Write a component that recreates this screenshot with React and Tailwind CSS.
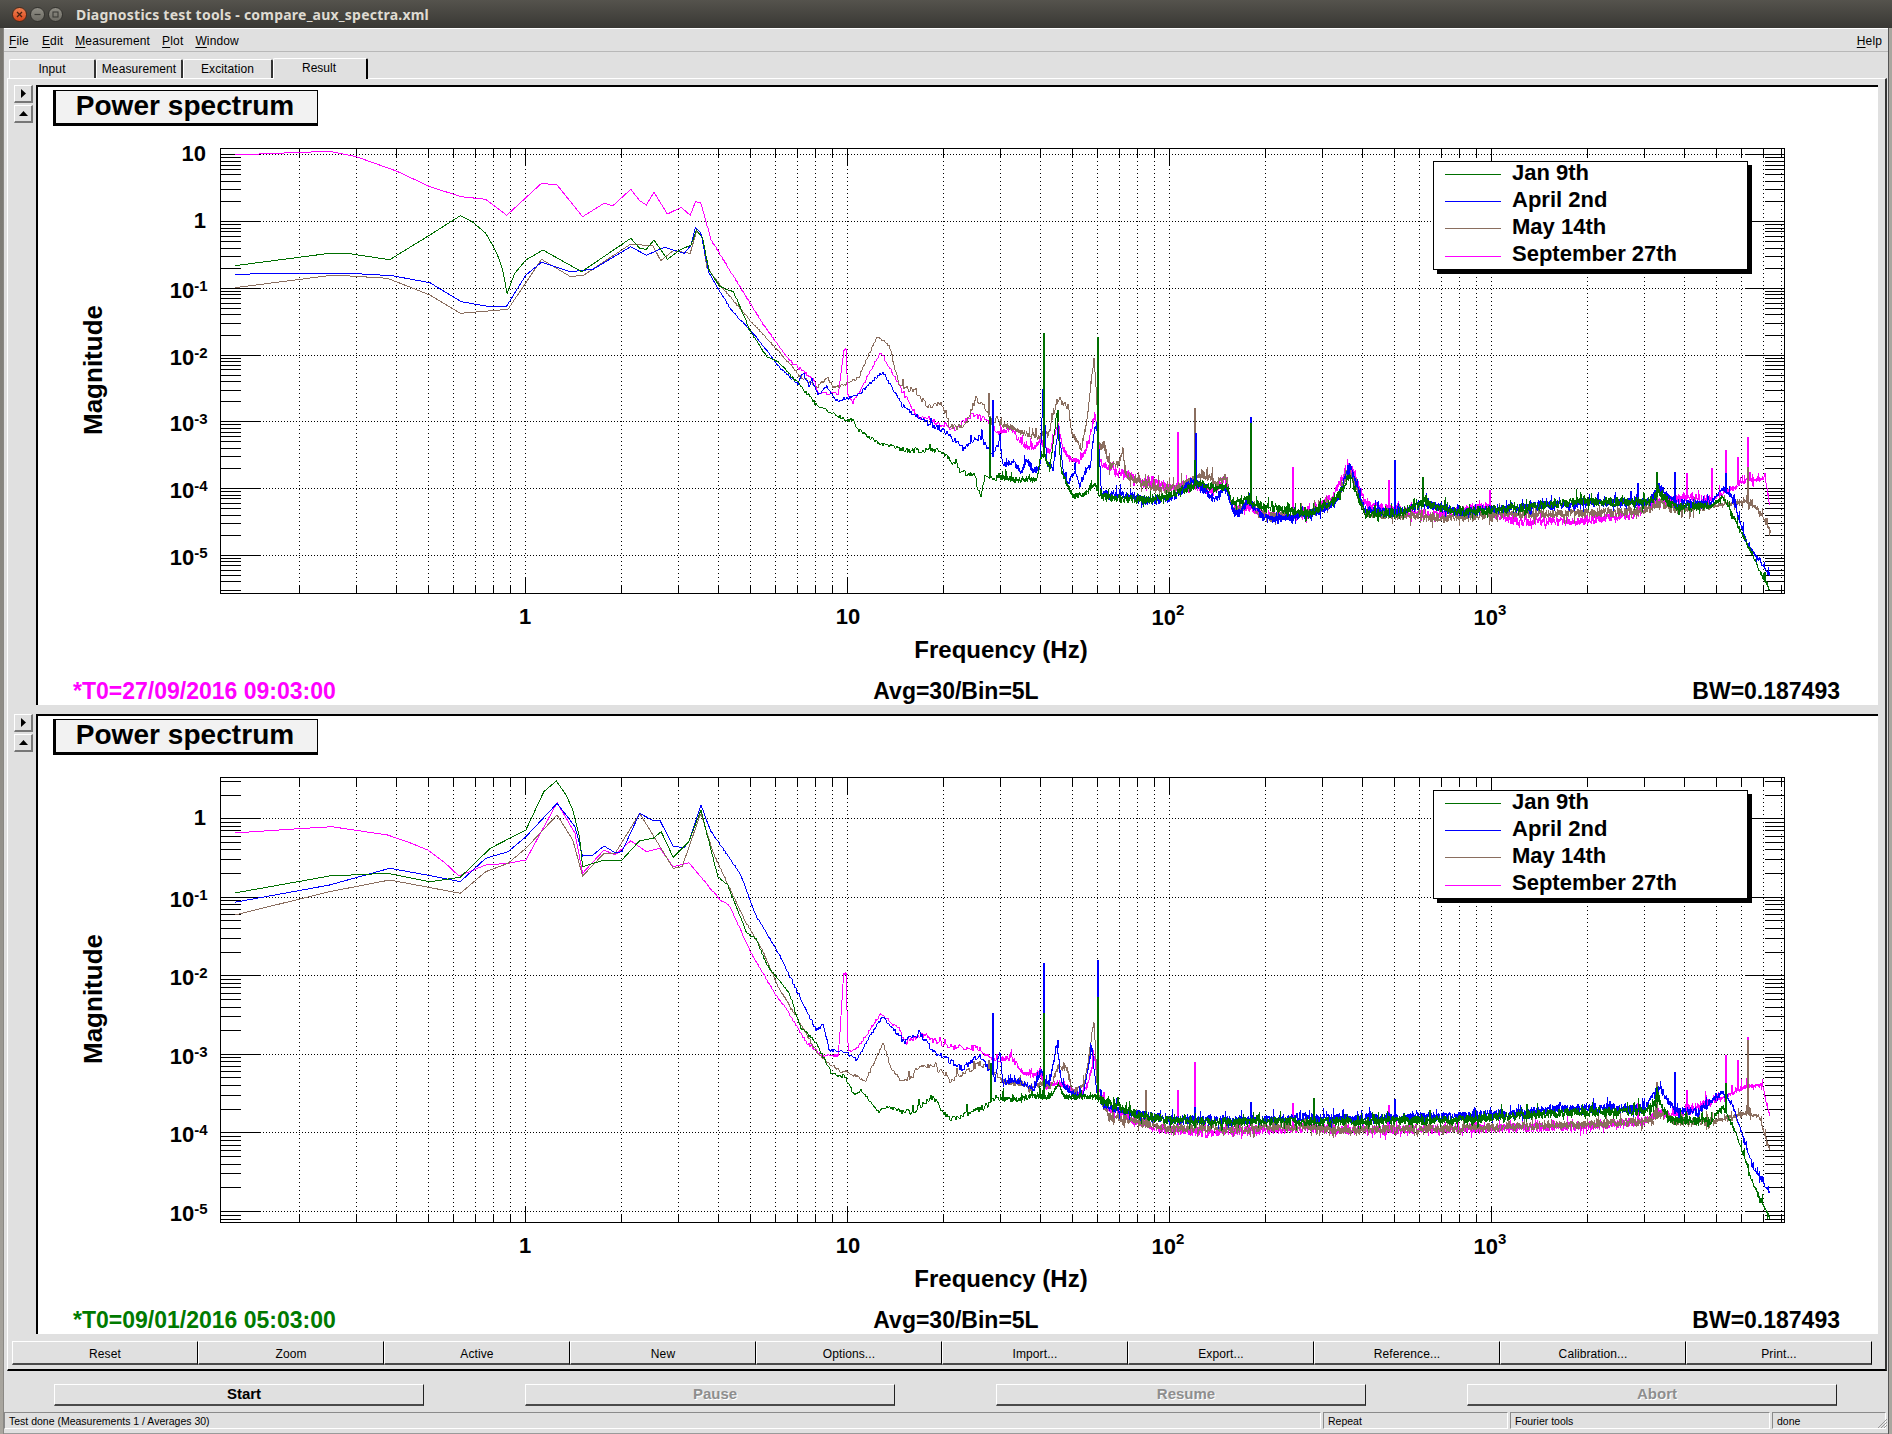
import React, { useMemo } from "react";

const MAGENTA = "#ff00ff", BLUE = "#0000ff", BROWN = "#8a6e5f", GREEN = "#006f00";
const L = 220.5, R = 1784.5, XS = 322, X1 = 525;
const xOf = (f) => X1 + XS * Math.log10(f);

const P1 = {
  magenta: {
    low: [[78,75],[170,70],[290,64],[350,80],[440,123],[515,170],[585,200],[640,208],[687,256],[765,160],[800,165],[857,260],[905,220],[925,227],[965,178],[985,212],[1000,225],[1017,187],[1047,252],[1078,232],[1098,256],[1110,215],[1122,220],[1145,330],[1200,450],[1265,590],[1320,690],[1375,750],[1385,790],[1430,790],[1442,660],[1447,655],[1451,790],[1462,820],[1480,780],[1525,665],[1568,770]],
    high: [[110,350],[150,370],[175,390],[200,345],[220,355],[240,390],[265,375],[680,640],[690,645],[760,640],[800,580],[825,490],[850,610],[870,620],[900,630],[960,645],[1050,620],[1060,640],[1100,665],[1200,665],[1300,640],[1330,610],[1380,590],[1420,600],[1450,570],[1480,540],[1510,535],[1518,620]],
    mid: [[0,340],[35,325],[60,370],[100,385],[120,360],[130,380],[150,395],[175,310],[185,370],[205,415],[240,425],[262,380],[285,285],[295,350],[300,430],[340,450],[370,460],[400,470],[430,490],[460,480],[500,505],[560,495],[620,510],[640,515],[680,470],[695,560],[745,560]],
    spikes: [[540,395],[730,500],[888,540],[1055,570],[1300,555],[1380,520],[1445,450],[1465,470],[1480,410],[1422,505]],
  },
  brown: {
    low: [[78,473],[300,435],[420,445],[515,495],[583,550],[690,538],[765,388],[830,440],[860,435],[965,342],[1015,348],[1032,392],[1060,362],[1098,370],[1112,305],[1125,320],[1135,410],[1165,465],[1235,575],[1300,670],[1345,740],[1385,770],[1405,740],[1420,775],[1450,760],[1475,745],[1517,618],[1545,650],[1568,775]],
    high: [[105,270],[130,320],[150,310],[165,380],[190,380],[208,295],[220,315],[235,370],[680,645],[700,650],[760,640],[800,610],[825,510],[850,640],[980,655],[1050,645],[1200,640],[1300,635],[1340,610],[1360,630],[1440,615],[1480,605],[1500,630],[1520,700]],
    mid: [[0,310],[60,335],[120,355],[130,340],[145,345],[170,245],[180,240],[205,260],[215,340],[245,385],[262,290],[282,125],[290,220],[296,380],[312,375],[330,440],[355,430],[370,390],[375,460],[420,490],[500,510],[560,490],[610,460],[650,490],[680,470],[695,560],[720,575],[745,540]],
    spikes: [[228,280],[568,325],[1330,515],[1480,500]],
  },
  blue: {
    low: [[78,433],[190,430],[350,431],[430,437],[515,458],[585,515],[640,528],[687,528],[730,435],[765,397],[830,425],[880,418],[965,350],[1000,376],[1040,352],[1085,370],[1100,345],[1110,292],[1122,310],[1140,430],[1190,540],[1245,620],[1300,715],[1340,760],[1350,725],[1365,770],[1370,745],[1385,795],[1405,770],[1425,812],[1450,805],[1470,800],[1530,725],[1568,815]],
    high: [[90,325],[130,370],[160,400],[185,445],[215,410],[235,470],[680,650],[700,660],[760,640],[800,610],[825,500],[850,630],[900,640],[950,610],[1000,635],[1200,610],[1320,605],[1335,560],[1360,610],[1420,610],[1440,565],[1455,590],[1480,730],[1500,780],[1518,830]],
    mid: [[0,360],[10,440],[40,425],[65,460],[80,415],[100,460],[120,440],[130,190],[140,430],[160,445],[175,320],[190,460],[205,490],[225,450],[240,500],[255,460],[270,440],[285,315],[295,350],[305,525],[340,525],[380,525],[440,545],[500,535],[530,525],[580,480],[640,535],[680,510],[700,575],[720,580],[745,540]],
    spikes: [[235,300],[320,245],[570,400],[660,350],[898,480],[945,560],[1300,550],[1360,515],[1445,520]],
  },
  green: {
    low: [[78,407],[290,370],[340,372],[425,389],[515,315],[583,257],[610,275],[640,310],[655,345],[665,370],[678,420],[688,490],[705,430],[730,390],[768,360],[855,425],[965,325],[985,355],[1000,358],[1017,330],[1047,388],[1075,360],[1100,345],[1112,300],[1125,320],[1140,420],[1165,470],[1195,485],[1235,610],[1270,680],[1295,695],[1340,760],[1385,830],[1450,870],[1465,870],[1470,895],[1520,940],[1568,955]],
    high: [[100,450],[130,450],[150,450],[185,520],[205,520],[215,590],[225,530],[680,620],[690,625],[760,640],[800,600],[825,530],[850,640],[900,640],[945,610],[1000,635],[1100,625],[1200,605],[1320,605],[1335,580],[1360,620],[1420,620],[1440,590],[1455,640],[1480,730],[1500,810],[1518,870]],
    mid: [[0,475],[50,480],[110,480],[125,400],[140,420],[150,450],[170,280],[185,460],[220,530],[260,520],[285,490],[300,530],[360,535],[440,540],[500,530],[550,510],[600,490],[640,505],[680,500],[700,555],[745,540]],
    spikes: [[320,100],[408,110],[342,330],[568,480],[660,370],[230,350],[945,530],[1330,515]],
  },
};

const P2 = {
  magenta: {
    low: [[78,189],[200,178],[295,170],[420,195],[470,218],[510,240],[550,280],[580,318],[640,285],[690,280],[730,270],[800,98],[840,190],[857,310],[905,240],[930,255],[965,212],[1000,245],[1030,235],[1060,290],[1095,278],[1165,390],[1185,405],[1235,550],[1285,665],[1320,730],[1360,820],[1400,860],[1430,855],[1442,610],[1447,610],[1452,845],[1475,830],[1525,730],[1568,780]],
    high: [[90,310],[120,285],[160,320],[210,325],[240,360],[680,572],[760,565],[780,570],[900,570],[1050,565],[1200,560],[1310,545],[1335,515],[1350,530],[1385,510],[1430,480],[1480,440],[1505,435],[1518,530]],
    mid: [[0,330],[35,320],[60,360],[90,375],[120,370],[135,410],[170,400],[200,410],[240,440],[265,400],[285,320],[295,420],[320,470],[400,510],[500,540],[620,550],[745,540]],
    spikes: [[540,450],[568,365],[1380,450],[1445,345],[1465,360],[1480,290],[730,490],[888,495],[400,330],[1300,490]],
  },
  brown: {
    low: [[78,435],[290,365],[425,330],[583,370],[640,305],[690,280],[730,235],[800,135],[835,210],[857,318],[905,250],[930,250],[985,130],[1060,295],[1080,290],[1122,130],[1150,250],[1220,450],[1260,540],[1295,650],[1340,750],[1385,855],[1430,900],[1460,910],[1490,935],[1530,820],[1550,900],[1568,925]],
    high: [[100,415],[115,375],[150,390],[165,425],[215,370],[240,400],[680,560],[760,560],[780,570],[1000,565],[1200,555],[1310,545],[1340,520],[1360,545],[1420,545],[1480,520],[1500,530],[1518,630]],
    mid: [[0,390],[30,400],[70,400],[90,420],[125,400],[150,410],[175,350],[200,355],[220,430],[255,400],[282,210],[293,430],[330,500],[400,510],[500,535],[620,535],[745,540]],
    spikes: [[487,450],[1330,425],[1480,300],[228,360]],
  },
  blue: {
    low: [[78,397],[290,345],[425,295],[520,318],[583,335],[640,265],[690,245],[730,200],[800,100],[840,170],[857,258],[880,255],[905,228],[930,248],[945,245],[985,130],[1015,152],[1030,150],[1060,230],[1085,232],[1095,215],[1122,105],[1145,185],[1210,310],[1245,435],[1300,560],[1340,670],[1380,780],[1395,765],[1410,840],[1450,850],[1470,870],[1500,800],[1530,740],[1568,800]],
    high: [[90,305],[115,280],[135,330],[185,385],[215,345],[240,420],[680,540],[760,530],[780,535],[1000,530],[1200,505],[1310,505],[1335,440],[1360,510],[1400,515],[1440,455],[1455,490],[1490,680],[1518,760]],
    mid: [[0,310],[10,400],[40,390],[70,400],[100,420],[125,360],[135,400],[150,400],[170,280],[185,400],[215,430],[250,440],[275,290],[292,440],[320,470],[400,490],[500,510],[620,510],[745,510]],
    spikes: [[235,220],[320,70],[342,300],[408,60],[568,500],[660,485],[898,478],[1360,395],[1445,430]],
  },
  green: {
    low: [[78,369],[290,318],[420,310],[515,335],[583,322],[650,235],[730,180],[770,65],[798,33],[820,75],[835,120],[850,200],[857,290],[905,270],[945,270],[985,212],[1015,205],[1033,185],[1060,262],[1095,215],[1122,120],[1160,320],[1182,345],[1225,490],[1245,505],[1270,585],[1320,670],[1345,770],[1380,820],[1415,910],[1445,920],[1465,975],[1480,960],[1520,1025],[1535,1010],[1568,1020]],
    high: [[100,520],[135,470],[165,540],[225,500],[240,470],[680,545],[760,545],[780,545],[1000,540],[1200,515],[1310,515],[1335,480],[1350,540],[1420,545],[1440,500],[1460,570],[1490,730],[1518,835]],
    mid: [[0,445],[40,450],[100,440],[125,440],[150,440],[175,400],[190,440],[240,440],[285,440],[320,460],[400,490],[500,510],[620,515],[745,515]],
    spikes: [[232,370],[320,220],[408,170],[765,475],[1330,440],[1445,430]],
  },
};

function rng(seed) {
  let a = seed;
  return () => {
    a |= 0; a = (a + 0x6d2b79f5) | 0;
    let t = Math.imul(a ^ (a >>> 15), 1 | a);
    t = (t + Math.imul(t ^ (t >>> 7), 61 | t)) ^ t;
    return ((t ^ (t >>> 14)) >>> 0) / 4294967296;
  };
}

function tracePath(tr, y0Low, y0Mid, y0High, seed) {
  const r = rng(seed);
  const midStart = 1000;
  const midEnd = 1000 + 745 / 3;
  const pts = [
    ...tr.low.map(([x, y]) => [200 + x / 2.24, y0Low + y / 3]),
    ...tr.high.map(([x, y]) => [850 + x / 1.65, y0High + y / 3]).filter((p) => p[0] > 900 && p[0] < midStart),
    ...tr.mid.map(([x, y]) => [1000 + x / 3, y0Mid + y / 3]),
    ...tr.high.map(([x, y]) => [850 + x / 1.65, y0High + y / 3]).filter((p) => p[0] > midEnd),
  ];
  const at = (x) => {
    for (let i = 1; i < pts.length; i++) {
      if (x <= pts[i][0]) {
        const [a, b] = pts[i - 1], [c, d] = pts[i];
        return b + ((d - b) * (x - a)) / Math.max(c - a, 0.001);
      }
    }
    return pts[pts.length - 1][1];
  };
  let d = "";
  const end = pts[pts.length - 1][0];
  const lowEnd = 700;
  pts.filter((p) => p[0] < lowEnd).forEach((p, i) => {
    d += (i ? "L" : "M") + p[0].toFixed(1) + " " + p[1].toFixed(1);
  });
  let x = lowEnd;
  while (x < end) {
    const amp = x < 790 ? 0.7 : x < 900 ? 1.7 : x < 1100 ? 3 : 4.6;
    let y = at(x) + (r() - 0.5) * 2 * amp * (x > end - 60 ? 0.4 : 1);
    if (x > 900 && r() < 0.06) y -= 2 + r() * 7;
    if (x > 1100 && r() < 0.06) y += 2 + r() * 4;
    d += "L" + x.toFixed(1) + " " + y.toFixed(1);
    x += x < 1000 ? 1 : 0.34;
  }
  tr.spikes.forEach(([zx, zy]) => {
    const sx = 850 + zx / 1.65;
    const top = (y0High + zy / 3).toFixed(1);
    const base = at(sx).toFixed(1);
    d += `M${sx.toFixed(1)} ${base}L${sx.toFixed(1)} ${top}M${(sx + 1).toFixed(1)} ${base}L${(sx + 1).toFixed(1)} ${top}`;
  });
  return d;
}

function Trace({ data, y0Low, y0Mid, y0High, seed, color }) {
  const d = useMemo(() => tracePath(data, y0Low, y0Mid, y0High, seed), []);
  return <path d={d} fill="none" stroke={color} strokeWidth="1" />;
}

function Plot({ dy, yZero, yDec, data, y0Low, y0Mid, y0High, yTop, yBot, yLabels, seed, t0, t0Color }) {
  const yOf = (e) => Math.round(yZero - yDec * e) + 0.5;
  const topY = yTop + 0.5, botY = yBot + 0.5;
  const majorsX = [0, 1, 2, 3];
  const minorsX = [];
  for (let e = -1; e <= 3; e++) {
    for (let m = 2; m <= 9; m++) {
      const px = xOf(m * Math.pow(10, e));
      if (px > L && px < R) minorsX.push(px);
    }
  }
  const hLines = [], minorY = [];
  for (let e = -6; e <= 1; e++) {
    const py = yOf(e);
    if (py > yTop && py < yBot) hLines.push(py);
    for (let m = 2; m <= 9; m++) {
      const q = yOf(e + Math.log10(m));
      if (q > yTop && q < yBot) minorY.push(q);
    }
  }
  const allX = [...minorsX, ...majorsX.map((e) => xOf(Math.pow(10, e)))];
  const tp = { y0Low, y0Mid, y0High };
  return (
    <svg width="1840" height="618" viewBox={`38 ${87 + dy} 1840 618`} className="block" shapeRendering="crispEdges">
      <g stroke="#000" strokeWidth="1">
        {allX.map((x, i) => (
          <line key={i} x1={x} x2={x} y1={topY} y2={botY} strokeDasharray="1 3" />
        ))}
        {hLines.map((y, i) => (
          <line key={i} x1={L} x2={R} y1={y} y2={y} strokeDasharray="1 2" />
        ))}
        {minorsX.map((x, i) => (
          <g key={i}>
            <line x1={x} x2={x} y1={topY} y2={topY + 8} />
            <line x1={x} x2={x} y1={botY} y2={botY - 8} />
          </g>
        ))}
        {majorsX.map((e) => {
          const x = xOf(Math.pow(10, e));
          return (
            <g key={e}>
              <line x1={x} x2={x} y1={topY} y2={topY + 16} />
              <line x1={x} x2={x} y1={botY} y2={botY - 16} />
            </g>
          );
        })}
        {minorY.map((y, i) => (
          <g key={i}>
            <line x1={L} x2={L + 20} y1={y} y2={y} />
            <line x1={R} x2={R - 20} y1={y} y2={y} />
          </g>
        ))}
        {hLines.map((y, i) => (
          <g key={i}>
            <line x1={L} x2={L + 40} y1={y} y2={y} />
            <line x1={R} x2={R - 40} y1={y} y2={y} />
          </g>
        ))}
      </g>
      <Trace data={data.magenta} {...tp} seed={seed + 1} color={MAGENTA} />
      <Trace data={data.brown} {...tp} seed={seed + 2} color={BROWN} />
      <Trace data={data.blue} {...tp} seed={seed + 3} color={BLUE} />
      <Trace data={data.green} {...tp} seed={seed + 4} color={GREEN} />
      <rect x={L} y={topY} width={R - L} height={botY - topY} fill="none" stroke="#000" strokeWidth="1" />
      <g fontWeight="700" fill="#000" shapeRendering="auto">
        {yLabels.map((e) =>
          e >= 0 ? (
            <text key={e} x="206" y={yOf(e) + 6.5} textAnchor="end" fontSize="22">{e === 0 ? "1" : "10"}</text>
          ) : (
            <text key={e} x="207.5" y={yOf(e) + 9} textAnchor="end" fontSize="22">
              10<tspan dy="-7" fontSize="15">{e}</tspan>
            </text>
          )
        )}
        <text x="525" y={624 + dy} textAnchor="middle" fontSize="22">1</text>
        <text x="848" y={624 + dy} textAnchor="middle" fontSize="22">10</text>
        <text x="1168" y={625 + dy} textAnchor="middle" fontSize="22">10<tspan dy="-10" fontSize="15">2</tspan></text>
        <text x="1490" y={625 + dy} textAnchor="middle" fontSize="22">10<tspan dy="-10" fontSize="15">3</tspan></text>
        <text x="1001" y={658 + dy} textAnchor="middle" fontSize="24">Frequency (Hz)</text>
        <text transform={`translate(102 ${370 + dy}) rotate(-90)`} textAnchor="middle" fontSize="26">Magnitude</text>
        <text x="73" y={699 + dy} fontSize="23" fill={t0Color}>{t0}</text>
        <text x="956" y={699 + dy} textAnchor="middle" fontSize="23">Avg=30/Bin=5L</text>
        <text x="1840" y={699 + dy} textAnchor="end" fontSize="23">BW=0.187493</text>
      </g>
    </svg>
  );
}

const ToggleBtn = ({ up }) => (
  <button className="w-[19px] h-[18px] bg-[#e0e0e0] border-t border-l border-t-white border-l-white border-b-2 border-r-2 border-b-[#777] border-r-[#777] flex items-center justify-center">
    <svg width="9" height="9" viewBox="0 0 9 9">
      {up ? <path d="M0 7h9L4.5 2z" fill="#000" /> : <path d="M2 0v9l5-4.5z" fill="#000" />}
    </svg>
  </button>
);

const LEGEND = [
  ["Jan 9th", "bg-[#006f00]"],
  ["April 2nd", "bg-[#0000ff]"],
  ["May 14th", "bg-[#8a6e5f]"],
  ["September 27th", "bg-[#ff00ff]"],
];

function Canvas({ children }) {
  return (
    <div className="relative w-[1842px] h-[620px] bg-white border-t-2 border-l-2 border-t-black border-l-black overflow-hidden">
      {children}
      <div className="absolute left-[15px] top-[3px] w-[265px] h-[36px] bg-[#f2f2f2] border border-black border-l-[3px] border-b-[3px] flex items-center justify-center pb-[2px] pr-[3px]">
        <span className="font-bold text-[28px] leading-none tracking-[0.05px] text-black">Power spectrum</span>
      </div>
      <div className="absolute left-[1395px] top-[74px] w-[315px] h-[109px] bg-white border border-black shadow-[4px_4px_0_#000]">
        {LEGEND.map(([t, c]) => (
          <div key={t} className="relative flex items-center h-[27.2px] -top-[1px]">
            <div className={`ml-[11px] w-[56px] h-[1px] ${c}`} />
            <span className="ml-[11px] font-bold text-[22px] leading-none text-black relative -top-[2px]">{t}</span>
          </div>
        ))}
      </div>
    </div>
  );
}

const Tab = ({ w, children, active }) => (
  <div
    className={
      active
        ? `h-[21px] bg-[#e0e0e0] border-t border-l border-t-white border-l-white border-r-2 border-r-black rounded-tl-[2px] rounded-tr-[2px] flex items-center justify-center text-[12px] pb-[2px] pr-[2px] text-black relative top-[1px] ${w}`
        : `h-[19px] bg-[#e0e0e0] border-t border-l border-t-white border-l-white border-r-2 border-r-[#333] rounded-tl-[2px] rounded-tr-[2px] flex items-center justify-center text-[12px] tracking-[0.1px] text-black ${w}`
    }
  >
    {children}
  </div>
);

const Mn = ({ u, rest, cls }) => (
  <span className={`text-[12px] tracking-[0.14px] text-black ${cls || ""}`}>
    <span className="underline underline-offset-2">{u}</span>
    {rest}
  </span>
);

const ToolBtn = ({ children }) => (
  <button className="w-[186px] h-[24px] bg-[#e0e0e0] border-t border-l border-t-white border-l-white border-b-2 border-r border-b-[#4a4a4a] border-r-black text-[12px] tracking-[0.1px] text-black flex items-center justify-center pt-[2px]">
    {children}
  </button>
);

const RunBtn = ({ children, on }) => (
  <button
    className={
      "w-[370px] h-[22px] bg-[#e0e0e0] border-t border-l border-t-white border-l-white border-b-2 border-r border-b-[#4a4a4a] border-r-[#222] text-[15px] font-bold flex items-center justify-center pl-[10px] " +
      (on ? "text-black" : "text-[#8e8e8e] [text-shadow:1px_1px_0_#fff]")
    }
  >
    {children}
  </button>
);

const StatusCell = ({ w, children }) => (
  <div className={`h-[17px] border-t border-l border-t-[#8a8a8a] border-l-[#8a8a8a] border-b border-r border-b-white border-r-white pl-[4px] text-[10.5px] leading-[17px] text-black overflow-hidden whitespace-nowrap ${w}`}>
    {children}
  </div>
);

export default function App() {
  return (
    <div className="w-[1892px] h-[1434px] flex flex-col overflow-hidden bg-[#e0e0e0] font-['Liberation_Sans',Arial,sans-serif]">
      {/* window title */}
      <div className="h-[28px] shrink-0 bg-gradient-to-b from-[#55534d] to-[#393834] flex items-center">
        <div className="ml-[12px] w-[15px] h-[15px] rounded-full bg-gradient-to-b from-[#f08050] to-[#d9451a] border border-[#4a2a1a] flex items-center justify-center">
          <svg width="7" height="7" viewBox="0 0 7 7"><path d="M1 1l5 5M6 1L1 6" stroke="#4a2312" strokeWidth="1.3" /></svg>
        </div>
        <div className="ml-[3px] w-[15px] h-[15px] rounded-full bg-gradient-to-b from-[#8f8d85] to-[#6e6c65] border border-[#33322e] flex items-center justify-center">
          <svg width="7" height="7" viewBox="0 0 7 7"><path d="M0.5 3.5h6" stroke="#3d3c38" strokeWidth="1.2" /></svg>
        </div>
        <div className="ml-[3px] w-[15px] h-[15px] rounded-full bg-gradient-to-b from-[#8f8d85] to-[#6e6c65] border border-[#33322e] flex items-center justify-center">
          <svg width="7" height="7" viewBox="0 0 7 7"><rect x="1" y="1" width="5" height="5" fill="none" stroke="#3d3c38" strokeWidth="1.1" /></svg>
        </div>
        <span className="ml-[13px] font-['Noto_Sans',sans-serif] font-bold text-[14px] tracking-[0.22px] text-[#dfdbd2] whitespace-nowrap">
          Diagnostics test tools - compare_aux_spectra.xml
        </span>
      </div>

      <div className="flex flex-1 min-h-0">
        <div className="w-[4px] shrink-0 bg-gradient-to-b from-[#77756f] to-[#a9a69f] border-r border-r-[#8a8884]" />
        <div className="w-[1884px] flex flex-col">
          {/* menu */}
          <div className="h-[24px] shrink-0 flex items-center pl-[5px] pr-[6px] pt-[2px] border-t border-t-white border-b border-b-[#b8b8b8]">
            <Mn u="F" rest="ile" />
            <Mn u="E" rest="dit" cls="ml-[13px]" />
            <Mn u="M" rest="easurement" cls="ml-[12px]" />
            <Mn u="P" rest="lot" cls="ml-[12px]" />
            <Mn u="W" rest="indow" cls="ml-[12px]" />
            <Mn u="H" rest="elp" cls="ml-auto" />
          </div>
          {/* tabs */}
          <div className="h-[26px] shrink-0 flex items-end pl-[5px]">
            <Tab w="w-[87px]">Input</Tab>
            <Tab w="w-[87px]">Measurement</Tab>
            <Tab w="w-[90px]">Excitation</Tab>
            <Tab w="w-[95px]" active>Result</Tab>
          </div>
          {/* tab panel */}
          <div className="ml-[3px] w-[1880px] h-[1293px] shrink-0 border-t border-l border-t-white border-l-white border-b-2 border-b-black border-r-2 border-r-[#333] flex flex-col">
            <div className="h-[6px] shrink-0" />
            <div className="flex">
              <div className="w-[28px] shrink-0 pl-[6px] flex flex-col gap-[2px]">
                <ToggleBtn />
                <ToggleBtn up />
              </div>
              <Canvas>
                <Plot
                  dy={0}
                  yZero={221.1}
                  yDec={66.75}
                  data={P1}
                  y0Low={130}
                  y0Mid={320}
                  y0High={300}
                  yTop={148}
                  yBot={593}
                  yLabels={[1, 0, -1, -2, -3, -4, -5]}
                  seed={100}
                  t0="*T0=27/09/2016 09:03:00"
                  t0Color="#ff00ff"
                />
              </Canvas>
            </div>
            <div className="h-[9px] shrink-0" />
            <div className="flex">
              <div className="w-[28px] shrink-0 pl-[6px] flex flex-col gap-[2px]">
                <ToggleBtn />
                <ToggleBtn up />
              </div>
              <Canvas>
                <Plot
                  dy={629}
                  yZero={818.2}
                  yDec={78.55}
                  data={P2}
                  y0Low={770}
                  y0Mid={950}
                  y0High={940}
                  yTop={777}
                  yBot={1222}
                  yLabels={[0, -1, -2, -3, -4, -5]}
                  seed={200}
                  t0="*T0=09/01/2016 05:03:00"
                  t0Color="#007a00"
                />
              </Canvas>
            </div>
            <div className="flex pl-[4px] mt-[7px]">
              {["Reset", "Zoom", "Active", "New", "Options...", "Import...", "Export...", "Reference...", "Calibration...", "Print..."].map((t) => (
                <ToolBtn key={t}>{t}</ToolBtn>
              ))}
            </div>
          </div>
          {/* run buttons */}
          <div className="h-[41px] shrink-0 pl-[50px] pt-[13px] flex gap-[101px]">
            <RunBtn on>Start</RunBtn>
            <RunBtn>Pause</RunBtn>
            <RunBtn>Resume</RunBtn>
            <RunBtn>Abort</RunBtn>
          </div>
          {/* status bar */}
          <div className="h-[17px] shrink-0 flex gap-[2px] relative">
            <StatusCell w="w-[1317px]">Test done (Measurements 1 / Averages 30)</StatusCell>
            <StatusCell w="w-[185px]">Repeat</StatusCell>
            <StatusCell w="w-[260px]">Fourier tools</StatusCell>
            <StatusCell w="w-[114px]">done</StatusCell>
            <svg width="12" height="12" viewBox="0 0 12 12" className="absolute right-0 bottom-0">
              <path d="M11 2L2 11M11 5L5 11M11 8L8 11" stroke="#9a9a9a" strokeWidth="1" />
            </svg>
          </div>
          <div className="flex-1 border-b border-b-[#9a9a9a]" />
        </div>
        <div className="w-[4px] shrink-0 bg-[#a9a69f] border-l border-l-[#555]" />
      </div>
    </div>
  );
}
